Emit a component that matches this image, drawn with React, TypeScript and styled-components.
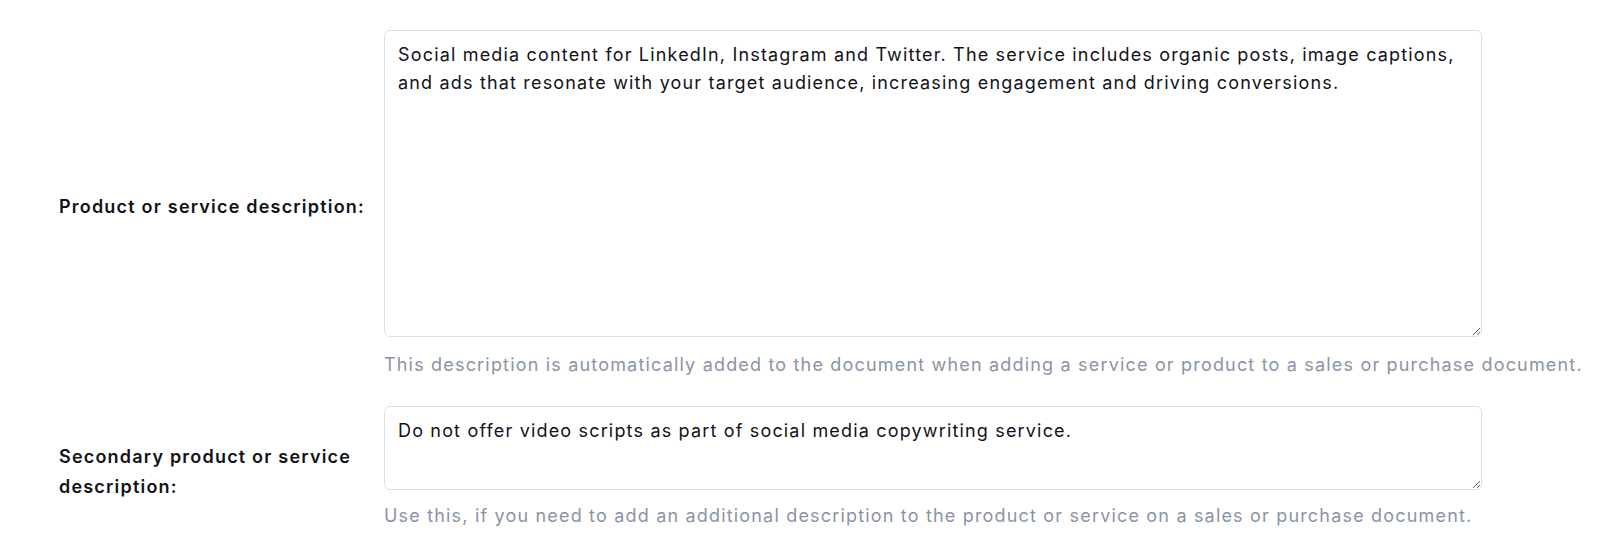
import React from "react";
import styled, { createGlobalStyle } from "styled-components";

const Global = createGlobalStyle`
  html, body { margin: 0; padding: 0; background: #ffffff; }
  body { font-family: Inter, "Noto Sans", sans-serif; color: #111827; }
`;

const Form = styled.div`
  display: flex;
  flex-direction: column;
  gap: 29px;
  padding: 30px 0 0 59px;
  width: 1541px;
`;

const Row = styled.div`
  display: grid;
  grid-template-columns: 325px 1098px;
  align-items: center;
`;

const Label = styled.label<{ $offset: number }>`
  font-size: 18px;
  letter-spacing: 1.2px;
  font-weight: 600;
  line-height: 30px;
  color: #111318;
  padding-right: 10px;
  padding-top: ${(p) => p.$offset}px;
`;

const Field = styled.div<{ $gap: number }>`
  display: flex;
  flex-direction: column;
  gap: ${(p) => p.$gap}px;
`;

const Area = styled.textarea<{ $h: number }>`
  box-sizing: border-box;
  width: 1098px;
  height: ${(p) => p.$h}px;
  border: 1px solid #dde0e8;
  border-radius: 6px;
  padding: 10px 13px;
  font-family: Inter, "Noto Sans", sans-serif;
  font-size: 18px;
  letter-spacing: 1.17px;
  line-height: 27.5px;
  color: #111318;
  resize: vertical;
  outline: none;
  background: #fff;
`;

const Help = styled.div`
  font-size: 18px;
  letter-spacing: 1.18px;
  line-height: 24px;
  color: #8a94a6;
  white-space: nowrap;
`;

export default function App() {
  return (
    <>
      <Global />
      <Form>
        <Row>
          <Label $offset={7}>Product or service description:</Label>
          <Field $gap={16}>
            <Area
              $h={307}
              readOnly
              defaultValue="Social media content for LinkedIn, Instagram and Twitter. The service includes organic posts, image captions, and ads that resonate with your target audience, increasing engagement and driving conversions."
            />
            <Help>
              This description is automatically added to the document when adding a service or product to a sales or purchase document.
            </Help>
          </Field>
        </Row>
        <Row>
          <Label $offset={10}>Secondary product or service description:</Label>
          <Field $gap={14}>
            <Area
              $h={84}
              readOnly
              defaultValue="Do not offer video scripts as part of social media copywriting service."
            />
            <Help>
              Use this, if you need to add an additional description to the product or service on a sales or purchase document.
            </Help>
          </Field>
        </Row>
      </Form>
    </>
  );
}
